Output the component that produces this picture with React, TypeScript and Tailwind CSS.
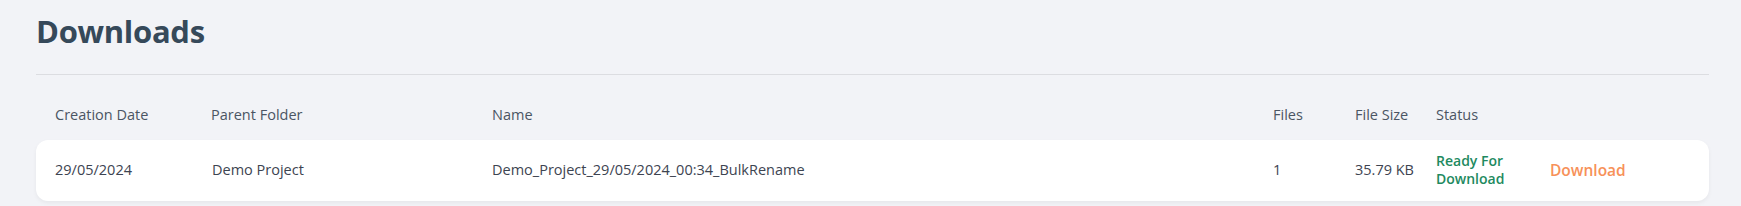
const rows = [
  {
    created: "29/05/2024",
    folder: "Demo Project",
    name: "Demo_Project_29/05/2024_00:34_BulkRename",
    files: 1,
    size: "35.79 KB",
  },
];

const cols = "grid grid-cols-[156px_281px_781px_82px_81px_114px_1fr] items-center pl-[19px]";

export default function App() {
  return (
    <div className="min-h-[206px] bg-[#f2f3f7] font-['Open_Sans',sans-serif]">
      <div className="ml-[36px] w-[1673px] pt-[9px]">
        <h1 className="text-[31px] font-bold leading-[44px] tracking-[-0.3px] text-[#36495a]">
          Downloads
        </h1>
        <div className="mt-[21px] h-px bg-[#dcdde1]" />

        <div className={`${cols} mt-[29px] text-[14.5px] text-[#4b5563]`}>
          <div>Creation Date</div>
          <div>Parent Folder</div>
          <div>Name</div>
          <div>Files</div>
          <div>File Size</div>
          <div>Status</div>
          <div />
        </div>

        {rows.map((r) => (
          <div
            key={r.name}
            className={`${cols} mt-[14px] h-[61px] rounded-[12px] bg-white text-[14.5px] text-[#3d4451] shadow-[0_2px_4px_rgba(0,0,0,0.05)]`}
          >
            <div>{r.created}</div>
            <div className="pl-px">{r.folder}</div>
            <div>{r.name}</div>
            <div>{r.files}</div>
            <div>{r.size}</div>
            <div className="w-[80px] text-[14px] font-semibold leading-[18px] text-[#1e8a60]">
              Ready For Download
            </div>
            <div>
              <button className="text-[15.5px] font-semibold text-[#f79159]">Download</button>
            </div>
          </div>
        ))}
      </div>
    </div>
  );
}
